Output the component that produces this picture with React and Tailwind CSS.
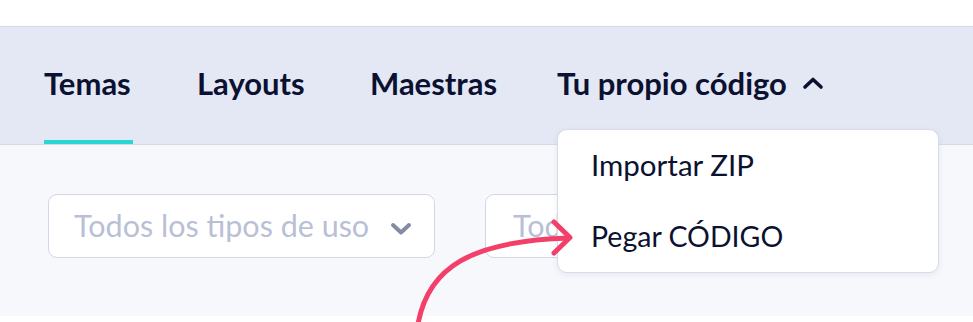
import React from "react";

const font = { fontFamily: "Lato, 'Noto Sans', sans-serif" };

function Tab({ label, active, className, children }) {
  return (
    <div
      className={
        "flex items-start pt-[41px] border-b-4 " +
        (active ? "border-[#2ad6d3] " : "border-transparent ") +
        className
      }
    >
      <span className="text-[31px] leading-[30px] font-bold text-[#0b1131] flex items-center whitespace-nowrap">
        {label}
        {children}
      </span>
    </div>
  );
}

export default function App() {
  return (
    <div
      className="relative w-[973px] h-[322px] overflow-hidden bg-white"
      style={font}
    >
      <div className="h-[26px] bg-white" />
      <div className="h-[119px] bg-[#e4e8f4] border-t border-b border-[#d6d9e7] flex pl-[44px]">
        <Tab label="Temas" active className="w-[89px] mr-[64px]" />
        <Tab label="Layouts" className="w-[173px]" />
        <Tab label="Maestras" className="w-[187px]" />
        <Tab label="Tu propio código" className="">
          <svg
            className="ml-[15px]"
            width="22"
            height="14"
            viewBox="0 0 22 14"
            fill="none"
          >
            <path
              d="M3 11 L11 3.5 L19 11"
              stroke="#0b1131"
              strokeWidth="3.6"
              strokeLinecap="round"
              strokeLinejoin="round"
            />
          </svg>
        </Tab>
      </div>
      <div className="h-[171px] bg-[#f7f8fc] pt-[49px] pl-[48px] flex gap-[50px]">
        <div className="w-[387px] h-[64px] bg-white border-[1.5px] border-[#d3d6e8] rounded-[9px] flex items-center pl-[25px] pr-[22px] justify-between">
          <span className="text-[30.5px] text-[#b9bfd5] whitespace-nowrap">Todos los tipos de uso</span>
          <svg width="22" height="14" viewBox="0 0 22 14" fill="none" className="mt-[6px]">
            <path
              d="M3 3 L11 10.5 L19 3"
              stroke="#858aa5"
              strokeWidth="4"
              strokeLinecap="round"
              strokeLinejoin="round"
            />
          </svg>
        </div>
        <div className="w-[387px] h-[64px] bg-white border-[1.5px] border-[#d3d6e8] rounded-[9px] flex items-center pl-[27px]">
          <span className="w-[44px] overflow-hidden whitespace-nowrap text-[30.5px] text-[#b9bfd5]">Todos</span>
        </div>
      </div>

      <div className="absolute left-[557px] top-[129px] w-[382px] h-[144px] bg-white border-[1.5px] border-[#d8dbea] rounded-[10px] shadow-[0_2px_6px_rgba(40,50,100,0.08)] flex flex-col pl-[33px] pt-[20px] gap-[41px]">
        <span className="text-[29.5px] leading-[30px] text-[#0b1131]">Importar ZIP</span>
        <span className="text-[28.5px] leading-[30px] text-[#0b1131]">Pegar CÓDIGO</span>
      </div>

      <svg
        className="absolute left-0 top-0 pointer-events-none"
        width="973"
        height="322"
        viewBox="0 0 973 322"
        fill="none"
      >
        <path
          d="M418 324 C 428 268, 470 241, 569 238"
          stroke="#f3406b"
          strokeWidth="5"
          strokeLinecap="round"
        />
        <path
          d="M554 222 L570 237.5 L554 253"
          stroke="#f3406b"
          strokeWidth="5"
          strokeLinecap="round"
          strokeLinejoin="round"
        />
      </svg>
    </div>
  );
}
